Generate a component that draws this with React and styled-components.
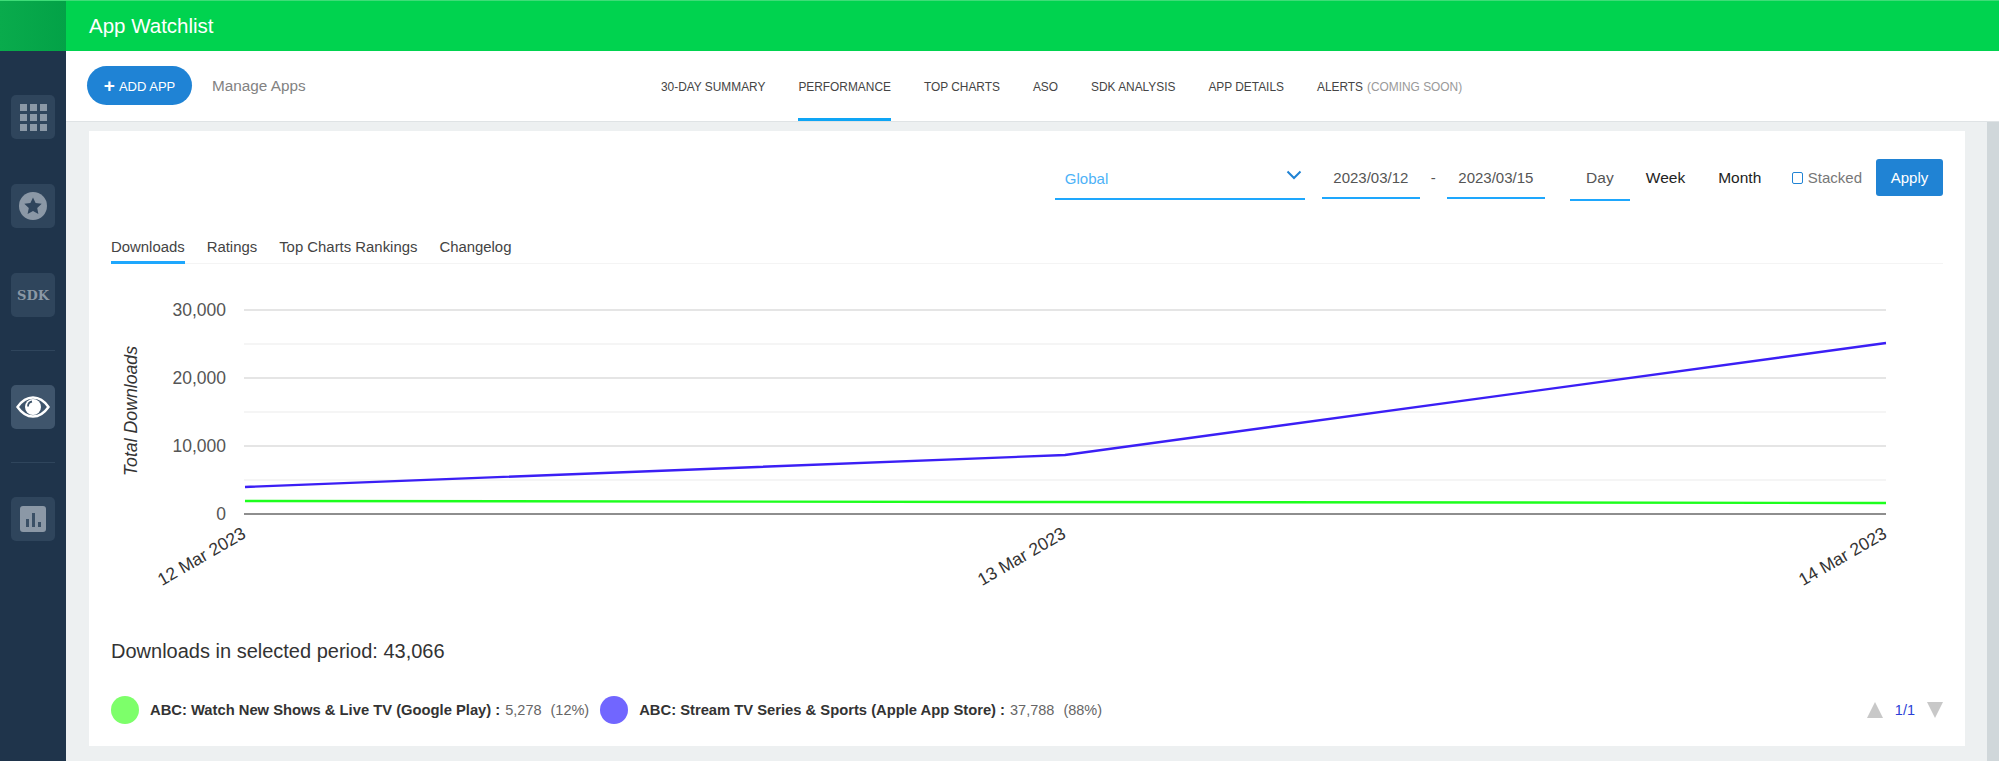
import React from "react";
import styled, { createGlobalStyle } from "styled-components";

const GlobalStyle = createGlobalStyle`
  html, body {
    margin: 0;
    padding: 0;
    height: 100%;
    overflow: hidden;
    font-family: "Liberation Sans", Arial, sans-serif;
    background: #edf0f1;
  }
`;

const NAV_ITEMS = ["30-DAY SUMMARY", "PERFORMANCE", "TOP CHARTS", "ASO", "SDK ANALYSIS", "APP DETAILS"];
const SUB_TABS = ["Downloads", "Ratings", "Top Charts Rankings", "Changelog"];
const Y_TICKS = [
  { y: 40, label: "30,000" },
  { y: 108, label: "20,000" },
  { y: 176, label: "10,000" },
  { y: 244, label: "0" },
];
const MINOR_TICKS = [74, 142, 210];
const DATES = [
  { x: 136, label: "12 Mar 2023" },
  { x: 956, label: "13 Mar 2023" },
  { x: 1777, label: "14 Mar 2023" },
];

function GridIcon() {
  const cells = [];
  for (let r = 0; r < 3; r++) {
    for (let c = 0; c < 3; c++) {
      cells.push(<rect key={r + "-" + c} x={c * 10} y={r * 10} width="7" height="7" />);
    }
  }
  return (
    <svg width="27" height="27" viewBox="0 0 27 27" fill="#8b98a6">
      {cells}
    </svg>
  );
}

function StarIcon() {
  return (
    <svg width="28" height="28" viewBox="0 0 28 28">
      <circle cx="14" cy="14" r="14" fill="#8b98a6" />
      <path d="M14 5.5l2.6 5.6 6.1.7-4.5 4.2 1.2 6L14 19l-5.4 3 1.2-6-4.5-4.2 6.1-.7z" fill="#2f455c" />
    </svg>
  );
}

function EyeIcon() {
  return (
    <svg width="34" height="22" viewBox="0 0 34 22">
      <path
        d="M1.5 11C6 4.5 11 1.5 17 1.5S28 4.5 32.5 11C28 17.5 23 20.5 17 20.5S6 17.5 1.5 11z"
        fill="none"
        stroke="#fff"
        strokeWidth="2.4"
      />
      <circle cx="17" cy="11" r="8" fill="#fff" />
      <path d="M12 10.5a5 5 0 0 1 4-5" fill="none" stroke="#3f556c" strokeWidth="1.8" />
    </svg>
  );
}

function BarsIcon() {
  return (
    <svg width="26" height="26" viewBox="0 0 26 26">
      <rect width="26" height="26" rx="3" fill="#8b98a6" />
      <rect x="6" y="13" width="3" height="8" fill="#3a5066" />
      <rect x="12" y="7" width="3" height="14" fill="#3a5066" />
      <rect x="18" y="16" width="3" height="5" fill="#3a5066" />
    </svg>
  );
}

function Chevron() {
  return (
    <svg width="16" height="10" viewBox="0 0 16 10">
      <path d="M1.5 1.5L8 8l6.5-6.5" fill="none" stroke="#2083d4" strokeWidth="2" />
    </svg>
  );
}

function Chart() {
  return (
    <ChartSvg viewBox="0 0 1832 350" width="1832" height="350">
      {MINOR_TICKS.map((y) => (
        <line key={y} x1="133" x2="1775" y1={y} y2={y} stroke="#f2f2f2" strokeWidth="1.5" />
      ))}
      {Y_TICKS.map((t) => (
        <g key={t.label}>
          <line
            x1="133"
            x2="1775"
            y1={t.y}
            y2={t.y}
            stroke={t.y === 244 ? "#8e8e8e" : "#dcdcdc"}
            strokeWidth={t.y === 244 ? "2" : "1.5"}
          />
          <AxisText x="115" y={t.y + 6} textAnchor="end">
            {t.label}
          </AxisText>
        </g>
      ))}
      <AxisTitle transform="translate(26 141) rotate(-90)" textAnchor="middle">
        Total Downloads
      </AxisTitle>
      <polyline points="134,231 954,232 1775,233" fill="none" stroke="#1dff1d" strokeWidth="2.4" />
      <polyline points="134,217 954,185 1775,73" fill="none" stroke="#3b1ff5" strokeWidth="2.4" />
      {DATES.map((d) => (
        <DateText key={d.label} transform={`translate(${d.x} 267) rotate(-30)`} textAnchor="end">
          {d.label}
        </DateText>
      ))}
    </ChartSvg>
  );
}

function App() {
  return (
    <Page>
      <GlobalStyle />
      <TopBar>
        <LogoSlot />
        <Title>App Watchlist</Title>
      </TopBar>
      <Body>
        <Sidebar>
          <SideButton><GridIcon /></SideButton>
          <SideButton><StarIcon /></SideButton>
          <SideButton><SdkText>SDK</SdkText></SideButton>
          <SideDivider />
          <SideButton $active><EyeIcon /></SideButton>
          <SideDivider />
          <SideButton><BarsIcon /></SideButton>
        </Sidebar>
        <Main>
          <Nav>
            <NavLeft>
              <AddButton><Plus>+</Plus>ADD APP</AddButton>
              <ManageLink>Manage Apps</ManageLink>
            </NavLeft>
            <NavTabs>
              {NAV_ITEMS.map((item) => (
                <NavTab key={item} $active={item === "PERFORMANCE"}>{item}</NavTab>
              ))}
              <NavTab>
                ALERTS <Soon>(COMING SOON)</Soon>
              </NavTab>
            </NavTabs>
          </Nav>
          <Content>
            <Card>
              <Filters>
                <Select>
                  <SelectValue>Global</SelectValue>
                  <Chevron />
                </Select>
                <DateInput>2023/03/12</DateInput>
                <Dash>-</Dash>
                <DateInput>2023/03/15</DateInput>
                <Period $active>Day</Period>
                <Period>Week</Period>
                <Period>Month</Period>
                <Stacked>
                  <CheckBox />
                  Stacked
                </Stacked>
                <ApplyButton>Apply</ApplyButton>
              </Filters>
              <SubTabs>
                {SUB_TABS.map((tab) => (
                  <SubTab key={tab} $active={tab === "Downloads"}>{tab}</SubTab>
                ))}
              </SubTabs>
              <Chart />
              <Total>Downloads in selected period: 43,066</Total>
              <Legend>
                <LegendItem>
                  <Dot $color="#7dff6a" />
                  <LegendName>ABC: Watch New Shows &amp; Live TV (Google Play) :</LegendName>
                  <LegendValue>5,278</LegendValue>
                  <LegendValue $pct>(12%)</LegendValue>
                </LegendItem>
                <LegendItem>
                  <Dot $color="#7166ff" />
                  <LegendName>ABC: Stream TV Series &amp; Sports (Apple App Store) :</LegendName>
                  <LegendValue>37,788</LegendValue>
                  <LegendValue $pct>(88%)</LegendValue>
                </LegendItem>
                <Pager>
                  <Arrow $up />
                  <PageText>1/1</PageText>
                  <Arrow />
                </Pager>
              </Legend>
            </Card>
            <Scrollbar />
          </Content>
        </Main>
      </Body>
    </Page>
  );
}

export default App;

const Page = styled.div`
  width: 1999px;
  height: 761px;
  display: flex;
  flex-direction: column;
  overflow: hidden;
`;

const TopBar = styled.div`
  height: 50px;
  border-top: 1px solid #3fdc78;
  background-color: #00d34f;
  display: flex;
  align-items: center;
  flex-shrink: 0;
`;

const LogoSlot = styled.div`
  width: 66px;
  height: 100%;
  background: linear-gradient(90deg, #09ab4c, #03a247);
`;

const Title = styled.div`
  margin-left: 23px;
  margin-top: -1px;
  color: #fff;
  font-size: 20.5px;
`;

const Body = styled.div`
  flex: 1;
  display: flex;
  min-height: 0;
`;

const Sidebar = styled.div`
  width: 66px;
  flex-shrink: 0;
  background-color: #1f344b;
  padding: 44px 11px 0;
  box-sizing: border-box;
  display: flex;
  flex-direction: column;
  gap: 45px;
`;

const SideButton = styled.div`
  width: 44px;
  height: 44px;
  border-radius: 5px;
  background-color: ${(p) => (p.$active ? "#3f556c" : "#2f455c")};
  display: flex;
  align-items: center;
  justify-content: center;
`;

const SdkText = styled.span`
  font-family: "DejaVu Serif", "Liberation Serif", serif;
  font-weight: 700;
  font-size: 13px;
  color: #8b98a6;
`;

const SideDivider = styled.div`
  height: 1px;
  background-color: #2f455c;
  margin: -12px 0 -11px;
`;

const Main = styled.div`
  flex: 1;
  display: flex;
  flex-direction: column;
  min-width: 0;
`;

const Nav = styled.div`
  height: 70px;
  flex-shrink: 0;
  box-sizing: content-box;
  background-color: #fff;
  border-bottom: 1px solid #dfe3e5;
  display: flex;
  align-items: stretch;
`;

const NavLeft = styled.div`
  width: 595px;
  padding-left: 21px;
  box-sizing: border-box;
  display: flex;
  align-items: center;
  gap: 20px;
`;

const AddButton = styled.button`
  width: 105px;
  height: 39px;
  margin-top: -1px;
  border: none;
  border-radius: 20px;
  background-color: #1f83d5;
  color: #fff;
  font-family: inherit;
  font-size: 13px;
  padding: 2px 0 0;
  display: flex;
  align-items: center;
  justify-content: center;
  gap: 4px;
`;

const Plus = styled.span`
  font-weight: 700;
  font-size: 19px;
  line-height: 13px;
  margin-top: -2px;
`;

const ManageLink = styled.span`
  color: #828282;
  font-size: 15.3px;
  margin-top: -1px;
`;

const NavTabs = styled.div`
  display: flex;
  gap: 33px;
`;

const NavTab = styled.div`
  display: flex;
  align-items: center;
  gap: 4px;
  box-sizing: border-box;
  padding-top: 5px;
  font-size: 11.9px;
  color: #444;
  border-bottom: 3px solid ${(p) => (p.$active ? "#0ea5f5" : "transparent")};
`;

const Soon = styled.span`
  color: #999;
`;

const Content = styled.div`
  flex: 1;
  display: flex;
  min-height: 0;
  padding-left: 23px;
  align-items: flex-start;
`;

const Card = styled.div`
  width: 1876px;
  height: 615px;
  margin-top: 9px;
  padding: 0 22px;
  box-sizing: border-box;
  background-color: #fff;
`;

const Filters = styled.div`
  display: flex;
  align-items: flex-start;
  justify-content: flex-end;
  padding-top: 28px;
  height: 101px;
  box-sizing: border-box;
`;

const Select = styled.div`
  width: 250px;
  height: 41px;
  margin-right: 17px;
  box-sizing: border-box;
  padding: 11px 3px 0 10px;
  border-bottom: 2px solid #1ea7fd;
  display: flex;
  justify-content: space-between;
`;

const SelectValue = styled.span`
  color: #4db2f7;
  font-size: 15px;
`;

const DateInput = styled.div`
  width: 98px;
  height: 40px;
  padding-top: 10px;
  box-sizing: border-box;
  border-bottom: 2px solid #1ea7fd;
  color: #555;
  font-size: 15px;
  text-align: center;
`;

const Dash = styled.div`
  width: 27px;
  padding-top: 10px;
  text-align: center;
  color: #555;
  font-size: 15px;
`;

const Period = styled.div`
  height: 42px;
  width: ${(p) => (p.$active ? "60px" : "auto")};
  margin-left: ${(p) => (p.$active ? "25px" : "0")};
  margin-right: ${(p) => (p.$active ? "16px" : "33px")};
  padding-top: 10px;
  box-sizing: border-box;
  text-align: center;
  font-size: 15.5px;
  color: ${(p) => (p.$active ? "#555" : "#222")};
  border-bottom: ${(p) => (p.$active ? "2px solid #1ea7fd" : "none")};
`;

const Stacked = styled.label`
  display: flex;
  align-items: center;
  gap: 5px;
  margin-top: 10px;
  margin-right: 14px;
  margin-left: -2.5px;
  color: #777;
  font-size: 15px;
`;

const CheckBox = styled.span`
  width: 9px;
  height: 10px;
  border: 1.5px solid #2083d4;
  border-radius: 2px;
`;

const ApplyButton = styled.button`
  width: 67px;
  height: 37px;
  border: none;
  border-radius: 3px;
  background-color: #2083d4;
  color: #fff;
  font-family: inherit;
  font-size: 15px;
  padding: 0;
`;

const SubTabs = styled.div`
  display: flex;
  gap: 22px;
  height: 32px;
  box-sizing: border-box;
  border-bottom: 1px solid #f4f4f4;
`;

const SubTab = styled.div`
  height: 32px;
  box-sizing: border-box;
  padding-top: 7px;
  font-size: 14.9px;
  color: #444;
  border-bottom: 3px solid ${(p) => (p.$active ? "#1ea7fd" : "transparent")};
`;

const ChartSvg = styled.svg`
  display: block;
  margin-top: 6px;
`;

const AxisText = styled.text`
  font-size: 17.5px;
  fill: #555;
`;

const AxisTitle = styled.text`
  font-size: 17.7px;
  font-style: italic;
  fill: #333;
`;

const DateText = styled.text`
  font-size: 17.5px;
  fill: #333;
`;

const Total = styled.div`
  margin-top: 20px;
  font-size: 20px;
  line-height: 22px;
  color: #333;
`;

const Legend = styled.div`
  margin-top: 34px;
  height: 28px;
  display: flex;
  align-items: center;
  gap: 11px;
`;

const LegendItem = styled.div`
  display: flex;
  align-items: center;
  gap: 5px;
`;

const Dot = styled.span`
  width: 28px;
  height: 28px;
  border-radius: 50%;
  margin-right: 6px;
  background-color: ${(p) => p.$color};
`;

const LegendName = styled.span`
  font-size: 14.75px;
  font-weight: 700;
  color: #333;
`;

const LegendValue = styled.span`
  font-size: 14.5px;
  color: #666;
  margin-left: ${(p) => (p.$pct ? "4px" : "0")};
`;

const Pager = styled.div`
  margin-left: auto;
  display: flex;
  align-items: center;
  gap: 12px;
`;

const Arrow = styled.span`
  width: 0;
  height: 0;
  border-left: 8px solid transparent;
  border-right: 8px solid transparent;
  border-top: ${(p) => (p.$up ? "none" : "16px solid #c8c8c8")};
  border-bottom: ${(p) => (p.$up ? "16px solid #c8c8c8" : "none")};
`;

const PageText = styled.span`
  font-size: 14.5px;
  color: #2b3fd6;
`;

const Scrollbar = styled.div`
  width: 12px;
  height: 100%;
  margin-left: 22px;
  background-color: #d0d7da;
`;
